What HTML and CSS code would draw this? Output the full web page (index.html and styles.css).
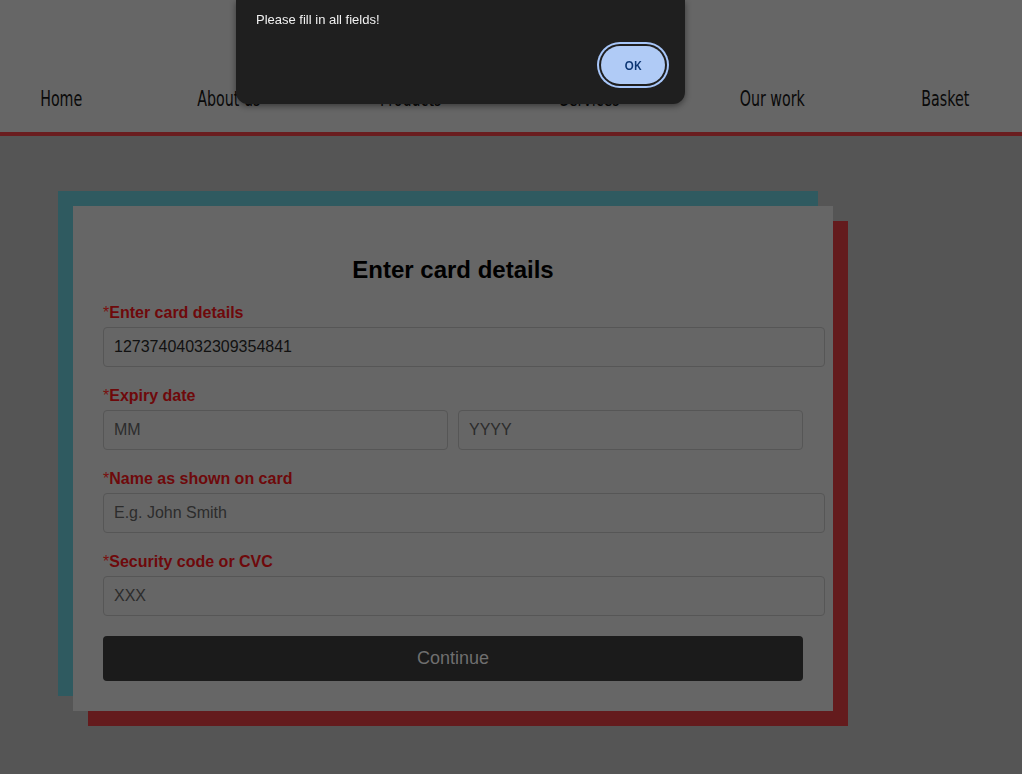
FILE: index.html
```html
<!DOCTYPE html>
<html>
<head>
<meta charset="utf-8"/>
<title>Payment - Card details</title>
<link rel="stylesheet" href="styles.css">
</head>
<body>

<header class="site-header">
  <nav class="main-nav">
    <a href="#">Home</a>
    <a href="#">About us</a>
    <a href="#">Products</a>
    <a href="#">Services</a>
    <a href="#">Our work</a>
    <a href="#">Basket</a>
  </nav>
</header>

<main class="page">
  <form class="card-form">
    <h2 class="form-title">Enter card details</h2>

    <div class="field">
      <label><span class="req">*</span>Enter card details</label>
      <input type="text" class="full" value="12737404032309354841">
    </div>

    <div class="field">
      <label><span class="req">*</span>Expiry date</label>
      <div class="split">
        <input type="text" placeholder="MM">
        <input type="text" placeholder="YYYY">
      </div>
    </div>

    <div class="field">
      <label><span class="req">*</span>Name as shown on card</label>
      <input type="text" class="full" placeholder="E.g. John Smith">
    </div>

    <div class="field">
      <label><span class="req">*</span>Security code or CVC</label>
      <input type="text" class="full" placeholder="XXX">
    </div>

    <button type="button" class="continue">Continue</button>
  </form>
</main>

<!-- browser alert shown over the page -->
<div class="alert-box">
  <p class="alert-msg">Please fill in all fields!</p>
  <div class="alert-actions">
    <button type="button" class="alert-ok">OK</button>
  </div>
</div>

</body>
</html>
```

FILE: styles.css
```css
body {
  margin: 0;
  background-color: #555555;
  font-family: "Liberation Sans", Arial, sans-serif;
}

.site-header {
  height: 132px;
  background-color: #666666;
  border-bottom: 4px solid #6a1d1f;
  display: flex;
  align-items: flex-end;
}

.main-nav {
  flex: 1;
  display: flex;
  justify-content: space-between;
  padding: 0 43px 18px 32px;
}

/* no Oswald offline: squeeze a condensed face to the same look */
.main-nav a {
  display: inline-block;
  font-family: "DejaVu Sans Condensed", sans-serif;
  font-size: 22px;
  line-height: 30px;
  color: #0a0a0a;
  text-decoration: none;
  transform: scaleX(0.72);
}

.page {
  padding: 70px 0 48px 73px;
}

.card-form {
  width: 700px;
  padding: 20px 30px 30px;
  background-color: #666666;
  box-shadow: -15px -15px 0 #2f5a60, 15px 15px 0 #641b1d;
}

.form-title {
  margin: 30px 0 19px;
  text-align: center;
  font-size: 24px;
  line-height: 28px;
  color: #000;
}

.field {
  margin-bottom: 19px;
}

.field label {
  display: block;
  margin-bottom: 6px;
  padding-top: 1px;
  font-size: 16px;
  line-height: 17px;
  font-weight: bold;
  color: #6e090b;
}

.field .req {
  font-weight: normal;
  color: #7a100f;
}

.field input {
  font-family: "Liberation Sans", Arial, sans-serif;
  font-size: 16px;
  line-height: 18px;
  height: 18px;
  padding: 10px;
  border: 1px solid #565656;
  border-radius: 4px;
  background-color: #666666;
  color: #111111;
  outline: none;
  margin: 0;
}

.field input::placeholder {
  color: #2c2c2c;
  opacity: 1;
}

.field input.full {
  width: 100%;
}

.split {
  display: flex;
  gap: 10px;
}

.split input {
  flex: 1 1 0;
  min-width: 0;
}

.continue {
  display: block;
  width: 100%;
  height: 45px;
  margin-top: 20px;
  border: none;
  border-radius: 4px;
  background-color: #1b1b1b;
  color: #6f6f6f;
  font-family: "Liberation Sans", Arial, sans-serif;
  font-size: 18px;
}

.field:last-of-type {
  margin-bottom: 0;
}

/* alert */
.alert-box {
  position: fixed;
  top: 0;
  left: 236px;
  width: 409px;
  height: 72px;
  padding: 12px 20px 20px;
  background-color: #1f1f1f;
  border-radius: 0 0 12px 12px;
  box-shadow: 0 2px 6px rgba(0, 0, 0, 0.45);
  display: flex;
  flex-direction: column;
}

.alert-msg {
  margin: 0 0 18px;
  font-family: "Liberation Sans", Arial, sans-serif;
  font-size: 13px;
  line-height: 16px;
  color: #f1f1f1;
}

.alert-actions {
  display: flex;
  justify-content: flex-end;
}

.alert-ok {
  width: 64px;
  height: 38px;
  border: none;
  border-radius: 19px;
  background-color: #b0cbf6;
  color: #0c3673;
  font-family: "Noto Sans", "Liberation Sans", sans-serif;
  font-size: 12px;
  font-weight: 600;
  box-shadow: 0 0 0 2px #1f1f1f, 0 0 0 4px #a8c7fa;
}
```
